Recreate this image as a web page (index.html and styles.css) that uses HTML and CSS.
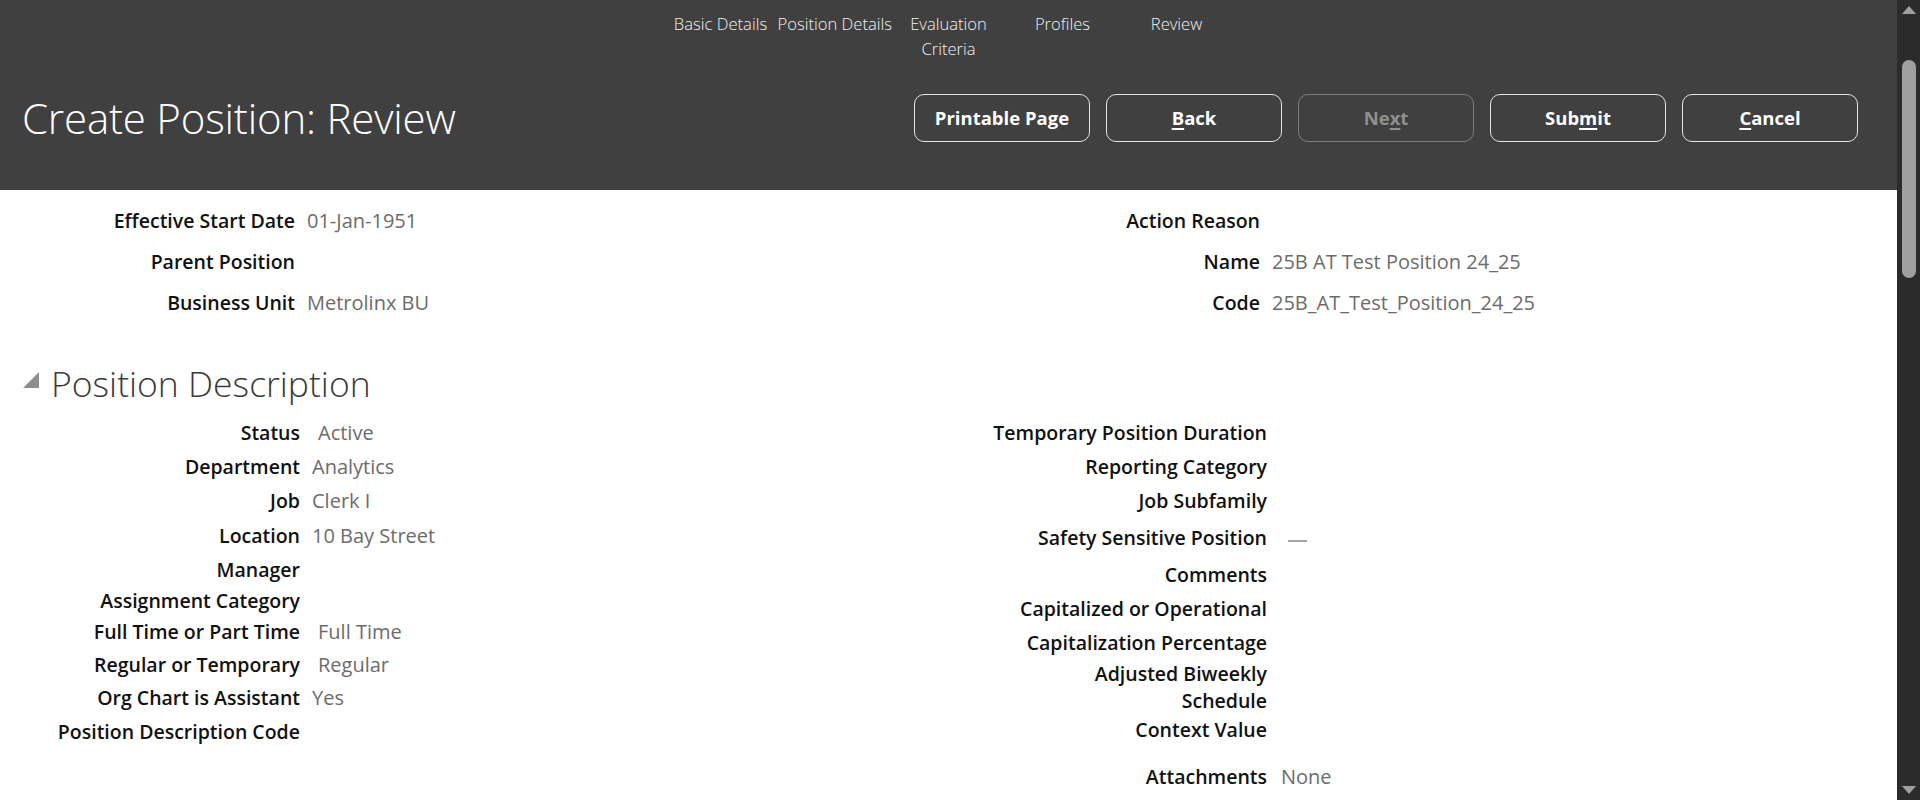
FILE: index.html
```html
<!DOCTYPE html>
<html lang="en">
<head>
<meta charset="utf-8">
<title>Create Position: Review</title>
<link rel="stylesheet" href="styles.css">
</head>
<body>
<div class="app">
  <div class="main">
    <header class="header">
      <nav class="train">
        <span class="train-item">Basic Details</span>
        <span class="train-item">Position Details</span>
        <span class="train-item">Evaluation<br>Criteria</span>
        <span class="train-item">Profiles</span>
        <span class="train-item">Review</span>
      </nav>
      <div class="title-row">
        <h1 class="title">Create Position: Review</h1>
        <div class="actions">
          <button class="btn">Printable Page</button>
          <button class="btn"><u>B</u>ack</button>
          <button class="btn btn-disabled">Ne<u>x</u>t</button>
          <button class="btn">Sub<u>m</u>it</button>
          <button class="btn"><u>C</u>ancel</button>
        </div>
      </div>
    </header>

    <main class="content">
      <section class="summary">
        <div class="form sum-left">
          <span class="label">Effective Start Date</span><span class="value">01-Jan-1951</span>
          <span class="label">Parent Position</span><span class="value"></span>
          <span class="label">Business Unit</span><span class="value">Metrolinx BU</span>
        </div>
        <div class="form sum-right">
          <span class="label">Action Reason</span><span class="value"></span>
          <span class="label">Name</span><span class="value">25B AT Test Position 24_25</span>
          <span class="label">Code</span><span class="value">25B_AT_Test_Position_24_25</span>
        </div>
      </section>

      <h2 class="section-title">
        <svg class="disclosure" width="16" height="16" viewBox="0 0 16 16" aria-hidden="true"><polygon points="0,16 16,0 16,16" fill="#8e8e8e"/></svg>
        <span>Position Description</span>
      </h2>

      <section class="details">
        <div class="form det-left">
          <span class="label">Status</span><span class="value ind">Active</span>
          <span class="label">Department</span><span class="value">Analytics</span>
          <span class="label">Job</span><span class="value">Clerk I</span>
          <span class="label">Location</span><span class="value">10 Bay Street</span>
          <span class="label">Manager</span><span class="value"></span>
          <span class="label">Assignment Category</span><span class="value"></span>
          <span class="label">Full Time or Part Time</span><span class="value ind">Full Time</span>
          <span class="label">Regular or Temporary</span><span class="value ind">Regular</span>
          <span class="label">Org Chart is Assistant</span><span class="value">Yes</span>
          <span class="label">Position Description Code</span><span class="value"></span>
        </div>
        <div class="form det-right">
          <span class="label">Temporary Position Duration</span><span class="value"></span>
          <span class="label">Reporting Category</span><span class="value"></span>
          <span class="label">Job Subfamily</span><span class="value"></span>
          <span class="label">Safety Sensitive Position</span><span class="value"><span class="dash"></span></span>
          <span class="label">Comments</span><span class="value"></span>
          <span class="label">Capitalized or Operational</span><span class="value"></span>
          <span class="label">Capitalization Percentage</span><span class="value"></span>
          <span class="label label-wrap">Adjusted Biweekly<br>Schedule</span><span class="value"></span>
          <span class="label">Context Value</span><span class="value"></span>
          <span class="label">Attachments</span><span class="value">None</span>
        </div>
      </section>
    </main>
  </div>

  <div class="scrollbar" aria-hidden="true">
    <span class="sb-arrow sb-up"></span>
    <span class="sb-track"><span class="sb-thumb"></span></span>
    <span class="sb-arrow sb-down"></span>
  </div>
</div>
</body>
</html>
```

FILE: styles.css
```css
* { box-sizing: border-box; }

html, body {
  margin: 0;
  padding: 0;
  height: 800px;
  overflow: hidden;
  background: #ffffff;
  font-family: "Open Sans", "Noto Sans", "Liberation Sans", sans-serif;
}

.app {
  display: flex;
  height: 800px;
}

.main {
  flex: 1;
  min-width: 0;
  display: flex;
  flex-direction: column;
}

/* ---------- header ---------- */
.header {
  flex: none;
  height: 190px;
  background: #404040;
  padding-top: 12px;
  color: #ffffff;
}

.train {
  display: flex;
  justify-content: center;
  height: 48px;
}

.train-item {
  width: 114px;
  text-align: center;
  font-size: 16.6px;
  line-height: 24.5px;
  font-weight: 300;
  color: #f2f2f2;
  white-space: nowrap;
}

.title-row {
  display: flex;
  align-items: center;
  margin-top: 34px;
  height: 48px;
  padding: 0 39px 0 22px;
}

.title {
  margin: 0;
  font-size: 42px;
  font-weight: 300;
  line-height: 48px;
  color: #ffffff;
  letter-spacing: -0.2px;
}

.actions {
  margin-left: auto;
  display: flex;
  gap: 16px;
}

.btn {
  width: 176px;
  height: 48px;
  border: 1px solid #e4e4e4;
  border-radius: 10px;
  background: transparent;
  color: #ffffff;
  font-family: inherit;
  font-size: 18.5px;
  font-weight: 700;
  padding: 0 0 2px;
}
.btn u { text-underline-offset: 3px; text-decoration-thickness: 2px; }

.btn-disabled {
  border-color: #7d7d7d;
  color: #8f8f8f;
}

/* ---------- content ---------- */
.content {
  flex: 1;
  padding-top: 10px;
}

.summary,
.details {
  display: grid;
  grid-template-columns: 948px 1fr;
  align-items: start;
}

.form {
  display: grid;
  align-items: center;
  font-size: 19.5px;
  line-height: 26px;
}

.label {
  text-align: right;
  font-weight: 600;
  color: #111111;
  white-space: nowrap;
}

.value {
  color: #6c6c6c;
  font-size: 20px;
  font-weight: 400;
  white-space: nowrap;
}

.ind { padding-left: 6px; }

.sum-left {
  grid-template-columns: 295px 1fr;
  column-gap: 12px;
  grid-template-rows: 41px 41px 41px;
}

.sum-right {
  grid-template-columns: 312px 1fr;
  column-gap: 12px;
  grid-template-rows: 41px 41px 41px;
}

.section-title {
  margin: 36px 0 9px;
  height: 48px;
  padding-left: 23px;
  display: flex;
  align-items: center;
  font-size: 35.5px;
  font-weight: 300;
  color: #3a3a3a;
  line-height: 48px;
}

.disclosure {
  margin-right: 12px;
  margin-top: -6px;
  flex: none;
}

.det-left {
  grid-template-columns: 300px 1fr;
  column-gap: 12px;
  grid-template-rows: 34px 34px 34px 36px 32px 30px 31px 35px 32px 36px;
}

.det-right {
  grid-template-columns: 319px 1fr;
  column-gap: 14px;
  grid-template-rows: 34px 34px 34px 40px 34px 34px 34px 54px 31px 64px;
}

.label-wrap { line-height: 27px; }

.dash {
  display: block;
  width: 19px;
  height: 2px;
  margin: 6px 0 0 7px;
  background: #a5a5a5;
}

/* ---------- scrollbar ---------- */
.scrollbar {
  width: 23px;
  flex: none;
  background: #2b2b2b;
  display: flex;
  flex-direction: column;
  align-items: center;
  padding: 6px 0 6px;
}

.sb-arrow {
  width: 0;
  height: 0;
  border-left: 7px solid transparent;
  border-right: 7px solid transparent;
  flex: none;
}
.sb-up { border-bottom: 8px solid #9f9f9f; }
.sb-down { border-top: 8px solid #9f9f9f; }

.sb-track {
  flex: 1;
  width: 100%;
  display: flex;
  justify-content: center;
  padding-top: 46px;
}

.sb-thumb {
  width: 14px;
  height: 218px;
  border-radius: 7px;
  background: #a0a0a0;
}
```
